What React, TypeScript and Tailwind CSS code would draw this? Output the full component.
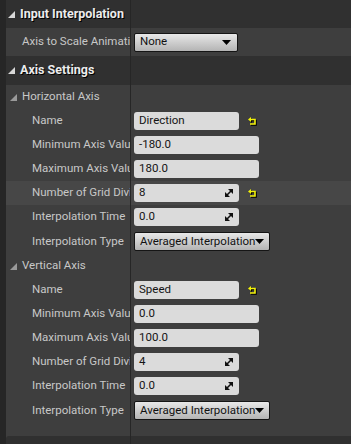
import React from "react";

const font = { fontFamily: "Roboto, 'Liberation Sans', sans-serif" };

function Tri({ light }: { light?: boolean }) {
  return (
    <svg width="7" height="7" viewBox="0 0 7 7" className="shrink-0">
      <polygon points="7,0 7,7 0,7" fill={light ? "#9a9a9a" : "#d8d8d8"} />
    </svg>
  );
}

function ResetIcon() {
  return (
    <svg width="9" height="9" viewBox="0 0 9 9" className="ml-[9px] drop-shadow-[1px_1px_0_#000]">
      <polygon points="0,2.5 3,0 3,5" fill="#f2f20a" />
      <path d="M2.5 2.5 H7 V7 H2" stroke="#f2f20a" strokeWidth="1.6" fill="none" />
    </svg>
  );
}

function SpinIcon() {
  return (
    <svg width="8" height="8" viewBox="0 0 8 8" className="ml-auto mr-[6px]">
      <polygon points="3,0 8,0 8,5" fill="#111" />
      <polygon points="0,3 0,8 5,8" fill="#111" />
      <path d="M2 6 L6 2" stroke="#111" strokeWidth="1.6" />
    </svg>
  );
}

function TextBox({ value, w, spin }: { value: string; w: string; spin?: boolean }) {
  return (
    <div className={`${w} h-[18px] rounded-[3px] bg-[#dbdbdb] flex items-center pl-[5px] text-[11.5px] text-[#141414]`}>
      <span>{value}</span>
      {spin && <SpinIcon />}
    </div>
  );
}

function Combo({ value, w }: { value: string; w: string }) {
  return (
    <div
      className={`${w} h-[19px] rounded-[2px] border border-[#151515] bg-gradient-to-b from-[#e8e8e8] to-[#b4b4b4] flex items-center pl-[5px] pr-[6px] text-[11.5px] text-[#111]`}
    >
      <span className="whitespace-nowrap">{value}</span>
      <svg width="9" height="5" viewBox="0 0 9 5" className="ml-auto shrink-0">
        <polygon points="0,0 9,0 4.5,5" fill="#000" />
      </svg>
    </div>
  );
}

function Header({ title, h = "h-[28px]" }: { title: string; h?: string }) {
  return (
    <div className={`${h} flex bg-[#303030]`}>
      <div className="w-[125px] border-r border-[#262626] flex items-center gap-[5px] pl-[2px] overflow-hidden">
        <Tri />
        <span className="text-[12.5px] font-bold text-[#ececec] whitespace-nowrap [text-shadow:1px_1px_0_#000]">{title}</span>
      </div>
      <div className="flex-1" />
    </div>
  );
}

function Sub({ title }: { title: string }) {
  return (
    <div className="h-[24px] flex">
      <div className="w-[125px] border-r border-[#262626] flex items-center gap-[5px] pl-[4px]">
        <Tri light />
        <span className="text-[11.5px] text-[#c8c8c8] whitespace-nowrap">{title}</span>
      </div>
      <div className="flex-1" />
    </div>
  );
}

function Row({
  label,
  children,
  h = "h-[24px]",
  indent = "pl-[26px]",
  hl,
  reset,
}: {
  label: string;
  children: React.ReactNode;
  h?: string;
  indent?: string;
  hl?: boolean;
  reset?: boolean;
}) {
  return (
    <div className={`${h} flex ${hl ? "bg-[#474747]" : ""}`}>
      <div className={`w-[125px] border-r border-[#262626] flex items-center ${indent} overflow-hidden`}>
        <span className="text-[11.5px] text-[#c8c8c8] whitespace-nowrap">{label}</span>
      </div>
      <div className="flex-1 flex items-center pl-[3px]">
        {children}
        {reset && <ResetIcon />}
      </div>
    </div>
  );
}

function AxisBlock({ name, min, max, grid, showReset }: { name: string; min: string; max: string; grid: string; showReset?: boolean }) {
  return (
    <>
      <Row label="Name" reset>
        <TextBox value={name} w="w-[105px]" />
      </Row>
      <Row label="Minimum Axis Value">
        <TextBox value={min} w="w-[125px]" />
      </Row>
      <Row label="Maximum Axis Value">
        <TextBox value={max} w="w-[125px]" />
      </Row>
      <Row label="Number of Grid Divisions" hl={showReset} reset={showReset}>
        <TextBox value={grid} w="w-[105px]" spin />
      </Row>
      <Row label="Interpolation Time">
        <TextBox value="0.0" w="w-[105px]" spin />
      </Row>
      <Row label="Interpolation Type" h="h-[25px]">
        <Combo value="Averaged Interpolation" w="w-[136px]" />
      </Row>
    </>
  );
}

export default function App() {
  return (
    <div className="w-[351px] h-[444px] bg-[#262626] overflow-hidden" style={font}>
      <div className="ml-[6px] bg-[#3e3e3e] h-full flex flex-col">
        <Header title="Input Interpolation" />
        <Row label="Axis to Scale Animation" h="h-[28px]" indent="pl-[16px]">
          <Combo value="None" w="w-[104px]" />
        </Row>
        <Header title="Axis Settings" h="h-[29px]" />
        <Sub title="Horizontal Axis" />
        <AxisBlock name="Direction" min="-180.0" max="180.0" grid="8" showReset />
        <Sub title="Vertical Axis" />
        <AxisBlock name="Speed" min="0.0" max="100.0" grid="4" />
        <div className="h-[13px] flex">
          <div className="w-[125px] border-r border-[#262626]" />
        </div>
        <div className="flex-1 flex bg-[#303030] rounded-tl-[3px]">
          <div className="w-[125px] border-r border-[#262626]" />
        </div>
      </div>
    </div>
  );
}
